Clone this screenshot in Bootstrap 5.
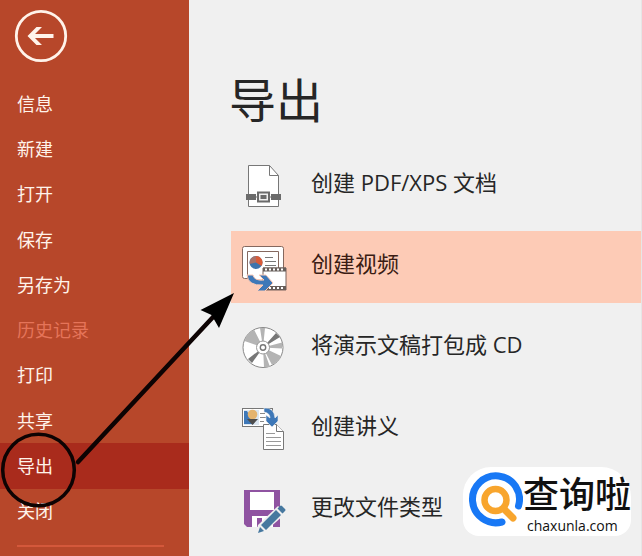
<!DOCTYPE html>
<html lang="zh-CN">
<head>
<meta charset="utf-8">
<meta name="viewport" content="width=device-width, initial-scale=1">
<title>导出</title>
<link href="https://cdn.jsdelivr.net/npm/bootstrap@5.3.0/dist/css/bootstrap.min.css" rel="stylesheet">
<style>
  body { font-family: "Open Sans", "Noto Sans CJK SC", sans-serif; background: #f0f0f0; color: #262626; }
  .backstage { min-height: 100vh; }
  .side { flex: 0 0 189px; background: #b7472a; }
  .back-btn { margin: 9px 0 18px 14px; width: 54px; height: 54px; }
  .side-list { display: grid; grid-auto-rows: 1fr; min-height: 453px; }
  .side-list a { color: #fff3ea; font-size: 18px; line-height: 24px; padding: 0 17px; text-decoration: none; }
  .side-list a.current { background: #a92b1c; }
  .side-list a.off { color: #e57459; }
  .side-rule { margin: 11px 25px 8px 17px; border-top: 2px solid #d4583b; opacity: 1; }
  .pane { padding: 72px 0 10px 40px; border-right: 1px solid #e6e6e6; }
  .pane h1 { font-size: 47px; line-height: 56px; font-weight: 400; margin: 0 0 22px 0; }
  .choices { gap: 9px; padding-left: 2px; }
  .choice { min-height: 72px; padding: 0 9px; gap: 23px; font-size: 22px; line-height: 30px; color: #262626; border-radius: 0; }
  .choice span { padding-bottom: 8px; }
  .choice.picked { background: #fdcbb6; color: #3a1c14; }
  .notes { left: 0; top: 0; pointer-events: none; }
  .site-tag { right: 11px; bottom: 20px; width: 168px; height: 69px; background: #fff; border-radius: 28px 30px 16px 16px; color: #111; }
  .tag-text { padding-top: 8px; }
  .site-tag .zh { font-family: "Liberation Sans", "Noto Sans CJK SC", sans-serif; font-size: 36px; line-height: 42px; font-weight: 500; }
  .site-tag .en { font-size: 14px; line-height: 18px; font-weight: 500; padding-left: 4px; }
</style>
<script src="https://cdn.jsdelivr.net/npm/bootstrap@5.3.0/dist/js/bootstrap.bundle.min.js"></script>
</head>
<body>
<div class="backstage d-flex position-relative overflow-hidden">
  <nav class="side d-flex flex-column" aria-label="文件">
    <button type="button" class="back-btn btn p-0 border-0 d-flex" aria-label="返回">
      <svg width="54" height="54" viewBox="0 0 54 54" fill="none" stroke="#fff3ea"><circle cx="27" cy="27" r="24.7" stroke-width="2.8"/><path d="M39.500 27H17" stroke-width="4"/><path d="M28 18h-5.500l-9 9 9 9H28l-9-9z" fill="#fff3ea" stroke="none"/></svg>
    </button>
    <div class="side-list">
      <a href="#" class="d-flex align-items-center">信息</a>
      <a href="#" class="d-flex align-items-center">新建</a>
      <a href="#" class="d-flex align-items-center">打开</a>
      <a href="#" class="d-flex align-items-center">保存</a>
      <a href="#" class="d-flex align-items-center">另存为</a>
      <a href="#" class="d-flex align-items-center off" aria-disabled="true">历史记录</a>
      <a href="#" class="d-flex align-items-center">打印</a>
      <a href="#" class="d-flex align-items-center">共享</a>
      <a href="#" class="d-flex align-items-center current" aria-current="page">导出</a>
      <a href="#" class="d-flex align-items-center">关闭</a>
    </div>
    <hr class="side-rule">
  </nav>

  <main class="pane flex-grow-1">
    <h1>导出</h1>
    <div class="choices d-flex flex-column">
      <button type="button" class="choice btn border-0 d-flex align-items-center text-start">
        <svg width="48" height="48" viewBox="0 0 48 48" fill="none" stroke="#777"><path d="M8.500 3.500h21l9 10v31h-30z" fill="#fff"/><path d="M29.500 3.500v10h9"/><path d="M6 32h10v6H6zM31 32h10v6H31z" fill="#6b6b6b" stroke="none"/><rect x="18" y="30.500" width="11" height="9" fill="#f0f0f0" stroke="#6b6b6b" stroke-width="2"/><rect x="20.500" y="33" width="6" height="4" fill="#6b6b6b" stroke="none"/><path d="M16 35h2m11 0h2"/></svg>
        <span>创建 PDF/XPS 文档</span>
      </button>
      <button type="button" class="choice picked btn border-0 d-flex align-items-center text-start">
        <svg width="48" height="48" viewBox="0 0 48 48" fill="none"><rect x="2.500" y="3.500" width="41" height="32" rx="2" fill="#fff" stroke="#85685e"/><path d="M7.500 36V8.500h31V36" fill="#fff" stroke="#85685e"/><circle cx="16" cy="19.500" r="6.500" fill="#3e74ad"/><path d="M16 19.500V13a6.500 6.500 0 0 1 5.500 10z" fill="#d95b38"/><path d="M16 19.500l-6.300 1.500A6.500 6.500 0 0 1 16 13z" fill="#aa7168"/><path d="M25 14.500h8M25 18.500h11M25 22.500h11" stroke="#777"/><path d="M23 25h23v22H23z" fill="#fff" stroke="#79635c"/><path d="M23 26.500h23M23 45h23" stroke="#675e5a" stroke-width="4"/><path d="M25 26.500h20M25 45h20" stroke="#fff" stroke-width="2" stroke-dasharray="2 2"/><path d="M7 32h6q1 6 11 5l-5-5h7l7 8-8 8h-8l6-6Q8 43 7 32z" fill="#3e78b8" stroke="#fdcbb6"/></svg>
        <span>创建视频</span>
      </button>
      <button type="button" class="choice btn border-0 d-flex align-items-center text-start">
        <svg width="48" height="48" viewBox="0 0 48 48"><circle cx="23" cy="23.500" r="20" fill="#fff" stroke="#888"/><path d="M23 23.500L4.500 17Q7 9 14 5.500zM23 23.500L20 4h5zM23 23.500L41 32q-3 6-9 9zM23 23.500L24 43h6zM23 23.500l19-5v6z" fill="#b4b4b4"/><path d="M23 23.500L36 9l4 4zM23 23.500L8 35l4 4z" fill="#777"/><circle cx="23" cy="23.500" r="6.500" fill="#fff" stroke="#999"/><circle cx="23" cy="23.500" r="2.700" fill="#fff" stroke="#777" stroke-width="1.400"/></svg>
        <span>将演示文稿打包成 CD</span>
      </button>
      <button type="button" class="choice btn border-0 d-flex align-items-center text-start">
        <svg width="48" height="48" viewBox="0 0 48 48" fill="none"><rect x="2.500" y="3.500" width="30" height="18" fill="#fff" stroke="#777"/><rect x="4" y="5" width="15" height="15" fill="#dbe6f1"/><path d="M4 6h3l7 13H4z" fill="#3e78b8"/><circle cx="12.500" cy="9.500" r="4.800" fill="#e5b46e"/><path d="M7 14h11l-5.500 6z" fill="#4d4d4d"/><path d="M20 8.500h5M20 12.500h6M20 16.500h4" stroke="#888"/><path d="M23.500 19.500h13l7 7v18h-20z" fill="#fff" stroke="#777"/><path d="M36.500 19.500v7h7" fill="#fff" stroke="#777"/><path d="M26 28.500h9M26 32.500h15M26 36.500h15M26 40.500h15" stroke="#999"/><path d="M24 3q10-1 11 10l3-3v6l-6 6-6-6v-6l4 3q0-5-6-6z" fill="#3e78b8" stroke="#f0f0f0" stroke-width=".6"/></svg>
        <span>创建讲义</span>
      </button>
      <button type="button" class="choice btn border-0 d-flex align-items-center text-start">
        <svg width="48" height="48" viewBox="0 0 48 48"><path d="M4 4h36v37H7l-3-3z" fill="#8f53a1"/><path d="M10 6h24v18H10zM12 30h21v11H22v-9h-5v9h-5z" fill="#fff"/><path d="M38 20l8 7-21 19-9 2 2-9z" fill="#f0f0f0"/><path d="M21 39l15-15 5 5-15 15zM37.500 22.500L40 20q1-1 2 0l3 3q1 1 0 2l-2.500 2.500zM20 41l4 4-6 2z" fill="#46789f"/></svg>
        <span>更改文件类型</span>
      </button>
    </div>
  </main>

  <svg class="notes position-absolute" width="240" height="520" viewBox="0 0 240 520" fill="none" stroke="#0d0303" aria-hidden="true"><circle cx="38.500" cy="470" r="35.800" stroke-width="3.500"/><path d="M78 462L214 316" stroke-width="4.500" stroke-linecap="round"/><path d="M234 293L200.500 310l11 5 7.500 13z" fill="#000" stroke="none"/></svg>

  <div class="site-tag position-absolute d-flex">
    <svg class="flex-shrink-0" width="60" height="69" viewBox="0 0 60 69" fill="none" stroke-linecap="round"><path d="M56.500 40A23.500 23.500 0 1 0 40 56" transform="translate(-1 -1)" stroke="#1878f5" stroke-width="7"/><circle cx="32.500" cy="33" r="11" stroke="#f8a52d" stroke-width="6.500"/><path d="M41 42l9 9" stroke="#f8a52d" stroke-width="7"/></svg>
    <div class="tag-text text-nowrap">
      <div class="zh">查询啦</div>
      <div class="en">chaxunla.com</div>
    </div>
  </div>
</div>
</body>
</html>
